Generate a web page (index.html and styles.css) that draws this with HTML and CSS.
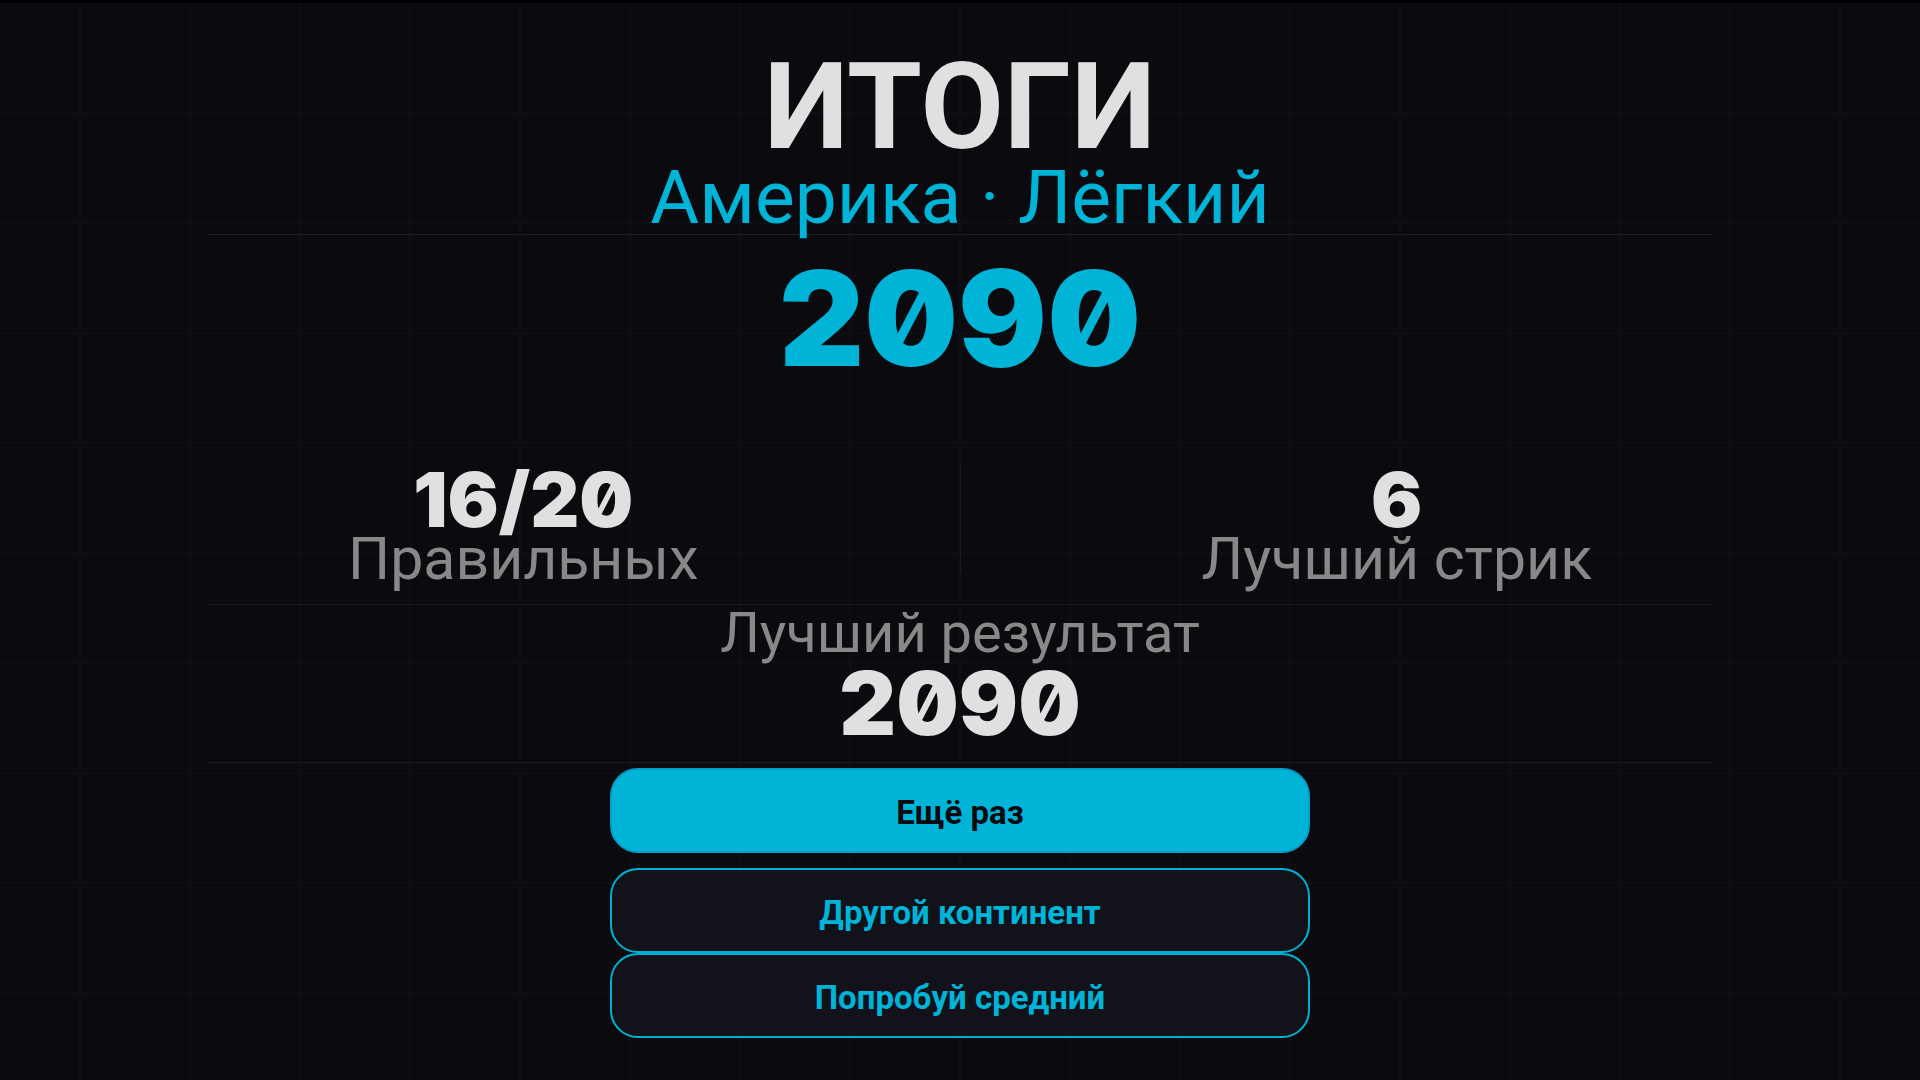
FILE: index.html
```html
<!DOCTYPE html>
<html lang="ru">
<head>
	<meta charset="UTF-8">
	<meta name="viewport" content="width=device-width, initial-scale=1.0">
	<title>Итоги</title>
	<link rel="stylesheet" href="styles.css">
</head>
<body>
	<main class="results">
		<header class="head">
			<h1>ИТОГИ</h1>
			<p class="mode">Америка · Лёгкий</p>
		</header>

		<p class="score">2090</p>

		<section class="stats">
			<div class="stat">
				<div class="value">16/20</div>
				<div class="label">Правильных</div>
			</div>
			<div class="divider"></div>
			<div class="stat">
				<div class="value">6</div>
				<div class="label">Лучший стрик</div>
			</div>
		</section>

		<section class="best">
			<div class="label">Лучший результат</div>
			<div class="value">2090</div>
		</section>

		<div class="actions">
			<button type="button" class="primary">Ещё раз</button>
			<button type="button">Другой континент</button>
			<button type="button">Попробуй средний</button>
		</div>
	</main>
</body>
</html>
```

FILE: styles.css
```css
* { box-sizing: border-box; margin: 0; }

body {
	min-height: 100vh;
	border-top: 3px solid #000;
	color: #e0e0e0;
	font-family: Roboto, "Liberation Sans", sans-serif;
	text-align: center;
	background-color: #0a0a0f;
	background-image:
		linear-gradient(90deg, transparent 54px, #0a1015 54px, #0a1015 56px, transparent 56px),
		linear-gradient(transparent 108px, #0a1015 108px);
	background-size: 110px 110px;
	background-position: 50% 4px;
}

.results { padding: 44px 207px 40px; }

.head { padding-bottom: 7px; border-bottom: 1px solid #1e1e28; }
.head h1 { font-size: 121px; line-height: 120px; font-weight: 700; }
.mode { font-size: 75px; line-height: 60px; color: #00b4d8; }

.score, .value { font-family: Inter, "DejaVu Sans", sans-serif; font-feature-settings: "zero"; font-weight: 900; }
.score { margin: 19px 0 81px; font-size: 132px; line-height: 128px; color: #00b4d8; }
.label { color: #888; }

.stats { display: flex; justify-content: space-between; padding-bottom: 21px; border-bottom: 1px solid #1b1b22; }
.stat { width: 42%; }
.stat .value { font-size: 76px; line-height: 72px; }
.stat .label { font-size: 59px; line-height: 48px; }
.divider { width: 1px; height: 110px; background-color: #1b1b22; }

.best { padding-bottom: 17px; border-bottom: 1px solid #1b1b22; }
.best .label { font-size: 56px; line-height: 56px; }
.best .value { font-size: 88px; line-height: 84px; }

.actions { display: flex; flex-direction: column; align-items: center; padding-top: 5px; }
.actions button {
	width: 100%;
	max-width: 700px;
	height: 85px;
	padding-top: 4px;
	border: 2px solid #00b0d3;
	border-radius: 28px;
	background-color: #12121a;
	color: #00b4d8;
	font-family: inherit;
	font-size: 33px;
	font-weight: 700;
	cursor: pointer;
}
.actions .primary { margin-bottom: 15px; border-color: #00a0c8; background-color: #00b4d8; color: #0a0a0f; }
```
